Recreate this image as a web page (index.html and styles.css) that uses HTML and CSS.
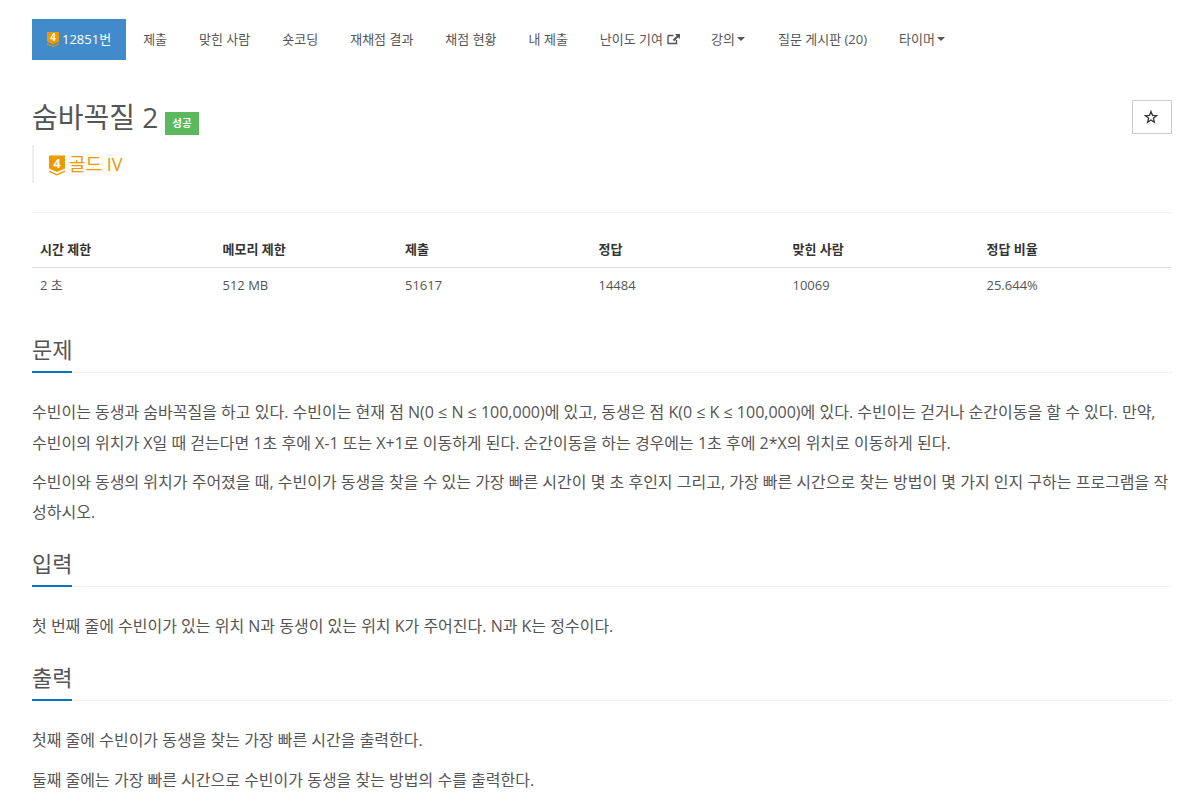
FILE: index.html
```html
<!DOCTYPE html>
<html lang="ko">
<head>
<meta charset="utf-8">
<title>숨바꼭질 2</title>
<link rel="stylesheet" href="styles.css">
</head>
<body>
<main class="page">
  <nav class="tabs">
    <a class="tab active"><svg class="tier tier-small" viewBox="0 0 16 20"><path class="tier-body" d="M0 0H16V13L8 16.500 0 13Z"/><path class="tier-chev" d="M0 15L8 18.500 16 15V16.500L8 20 0 16.500Z"/><text class="tier-num" x="8" y="12">4</text></svg>12851번</a>
    <a class="tab">제출</a>
    <a class="tab">맞힌 사람</a>
    <a class="tab">숏코딩</a>
    <a class="tab">재채점 결과</a>
    <a class="tab">채점 현황</a>
    <a class="tab">내 제출</a>
    <a class="tab">난이도 기여<svg class="ext" viewBox="0 0 14 12"><path d="M1 2.500H6.500M1 2.500V10.500H9.500V7" fill="none" stroke="currentColor" stroke-width="1.400"/><path d="M8 1H13V6L11.300 4.300 7.300 8.300 5.700 6.700 9.700 2.700Z" fill="currentColor"/></svg></a>
    <a class="tab">강의<span class="caret"></span></a>
    <a class="tab">질문 게시판 (20)</a>
    <a class="tab">타이머<span class="caret"></span></a>
  </nav>

  <header class="head">
    <div class="title-row">
      <h1 class="title">숨바꼭질 2<span class="label">성공</span></h1>
      <button class="star"><svg viewBox="0 0 14 14"><path d="M7 1.500L8.500 5.300 12.500 5.600 9.400 8.200 10.400 12.200 7 10 3.600 12.200 4.600 8.200 1.500 5.600 5.500 5.300Z" fill="none" stroke="currentColor" stroke-width="1.300"/></svg></button>
    </div>
    <blockquote class="tier-line"><svg class="tier tier-big" viewBox="0 0 16 20"><path class="tier-body" d="M0 0H16V13L8 16.500 0 13Z"/><path class="tier-chev" d="M0 15L8 18.500 16 15V16.500L8 20 0 16.500Z"/><text class="tier-num" x="8" y="12">4</text></svg><span>골드 IV</span></blockquote>
  </header>

  <table class="info">
    <thead>
      <tr><th>시간 제한</th><th>메모리 제한</th><th>제출</th><th>정답</th><th>맞힌 사람</th><th>정답 비율</th></tr>
    </thead>
    <tbody>
      <tr><td>2 초</td><td>512 MB</td><td>51617</td><td>14484</td><td>10069</td><td>25.644%</td></tr>
    </tbody>
  </table>

  <section class="sec first">
    <div class="sec-head"><h2>문제</h2></div>
    <p class="loose">수빈이는 동생과 숨바꼭질을 하고 있다. 수빈이는 현재 점 N(0 ≤ N ≤ 100,000)에 있고, 동생은 점 K(0 ≤ K ≤ 100,000)에 있다. 수빈이는 걷거나 순간이동을 할 수 있다. 만약, 수빈이의 위치가 X일 때 걷는다면 1초 후에 X-1 또는 X+1로 이동하게 된다. 순간이동을 하는 경우에는 1초 후에 2*X의 위치로 이동하게 된다.</p>
    <p>수빈이와 동생의 위치가 주어졌을 때, 수빈이가 동생을 찾을 수 있는 가장 빠른 시간이 몇 초 후인지 그리고, 가장 빠른 시간으로 찾는 방법이 몇 가지 인지 구하는 프로그램을 작성하시오.</p>
  </section>
  <section class="sec">
    <div class="sec-head"><h2>입력</h2></div>
    <p>첫 번째 줄에 수빈이가 있는 위치 N과 동생이 있는 위치 K가 주어진다. N과 K는 정수이다.</p>
  </section>
  <section class="sec">
    <div class="sec-head"><h2>출력</h2></div>
    <p>첫째 줄에 수빈이가 동생을 찾는 가장 빠른 시간을 출력한다.</p>
    <p>둘째 줄에는 가장 빠른 시간으로 수빈이가 동생을 찾는 방법의 수를 출력한다.</p>
  </section>
</main>
</body>
</html>
```

FILE: styles.css
```css
* { box-sizing: border-box; }
html, body { margin: 0; padding: 0; background: #fff; overflow: hidden; }
body {
  font-family: "Open Sans", "Noto Sans CJK KR", sans-serif;
  font-size: 14px;
  line-height: 20px;
  color: #555;
  height: 807px;
}
.page { width: 1140px; margin-left: 32px; padding-top: 19px; }

.tabs { display: flex; height: 41px; }
.tab {
  display: flex;
  align-items: center;
  padding: 0 16px 2px;
  font-size: 13px;
  color: #555;
  white-space: pre;
}
.tab.active { background: #428bca; color: #fff; padding: 0 15px 2px; margin-right: 1px; }

.tier { display: inline-block; flex: none; }
.tier-body { fill: #ec9a00; }
.tier-chev { fill: #ec9a00; }
.tier-num { fill: #fff; font-weight: 700; font-size: 13px; text-anchor: middle; font-family: "Open Sans", sans-serif; }
.tier-small { width: 12px; height: 15px; margin: 2px 3px 0 0; }
.tier-big { width: 16px; height: 21px; margin: 2px 4px 0 0; }
.ext { width: 14px; height: 12px; margin: 0 -2px 0 4px; }
.caret {
  width: 0; height: 0; margin: 0 1px 0 2px;
  border-top: 4px solid currentColor;
  border-left: 4px solid transparent;
  border-right: 4px solid transparent;
}

.head { padding-bottom: 29px; border-bottom: 1px solid #eee; margin-top: 40px; }
.title-row { display: flex; justify-content: space-between; align-items: flex-start; }
.title { margin: -1px 0 1px; font-size: 28px; line-height: 36px; font-weight: 400; color: #555; display: flex; align-items: flex-start; }
.label {
  margin: 13px 0 0 7px; background: #5cb85c; color: #fff; font-size: 10.500px; font-weight: 600;
  line-height: 23px; height: 23px; padding: 0 7px;
}
.star { width: 40px; height: 34px; padding: 0; background: #fff; border: 1px solid #ccc; color: #333; display: flex; align-items: center; justify-content: center; }
.star svg { width: 14px; height: 14px; margin-right: 2px; }
.tier-line {
  margin: 9px 0 0; height: 38px; padding-left: 15px; border-left: 2px solid #eee;
  display: flex; align-items: center; color: #ec9a00; font-size: 18px;
}

.info { width: 100%; border-collapse: collapse; margin-top: 19px; font-size: 13px; table-layout: fixed; }
.info th, .info td { text-align: left; padding: 8px; line-height: 19px; }
.info th { border-bottom: 1px solid #ddd; color: #333; font-weight: 700; }
.info th:nth-child(1) { width: 182.500px; }
.info th:nth-child(2) { width: 182.500px; }
.info th:nth-child(3) { width: 193.500px; }
.info th:nth-child(4) { width: 194px; }
.info th:nth-child(5) { width: 194px; }

.sec { margin-top: 21px; }
.sec.first { margin-top: 31px; }
.sec-head { border-bottom: 1px dotted #e5e5e5; margin-bottom: 24px; height: 39px; }
.sec-head h2 {
  margin: 0 0 -1px; display: inline-block; font-size: 22px; line-height: 30px; font-weight: 400; color: #555;
  padding-bottom: 7px; border-bottom: 2px solid #0076c0;
}
.sec p { margin: 0 0 10px; font-size: 16px; line-height: 30px; color: #555; }
.sec p.loose { line-height: 31px; margin-bottom: 8px; }
```
